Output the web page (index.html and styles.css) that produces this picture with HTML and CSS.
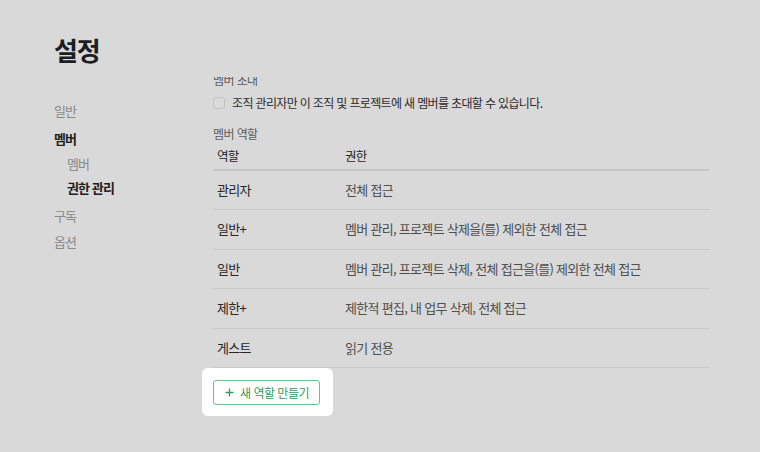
FILE: index.html
```html
<!DOCTYPE html>
<html lang="ko">
<head>
<meta charset="utf-8">
<title>설정</title>
<link rel="stylesheet" href="styles.css">
</head>
<body>
<div class="page">
  <h1 class="title">설정</h1>
  <div class="layout">
    <nav class="sidebar">
      <a class="nav-item">일반</a>
      <a class="nav-item active">멤버</a>
      <a class="nav-sub">멤버</a>
      <a class="nav-sub active">권한 관리</a>
      <a class="nav-item">구독</a>
      <a class="nav-item last">옵션</a>
    </nav>
    <main class="scroll">
      <div class="scroll-inner">
        <div class="section-label">멤버 초대</div>
        <label class="check-row">
          <span class="checkbox"></span>
          <span class="check-text">조직 관리자만 이 조직 및 프로젝트에 새 멤버를 초대할 수 있습니다.</span>
        </label>
        <div class="section-label roles">멤버 역할</div>
        <div class="table">
          <div class="row head">
            <div class="cell c1">역할</div>
            <div class="cell c2">권한</div>
          </div>
          <div class="row">
            <div class="cell c1">관리자</div>
            <div class="cell c2">전체 접근</div>
          </div>
          <div class="row">
            <div class="cell c1">일반+</div>
            <div class="cell c2">멤버 관리, 프로젝트 삭제을(를) 제외한 전체 접근</div>
          </div>
          <div class="row">
            <div class="cell c1">일반</div>
            <div class="cell c2">멤버 관리, 프로젝트 삭제, 전체 접근을(를) 제외한 전체 접근</div>
          </div>
          <div class="row">
            <div class="cell c1">제한+</div>
            <div class="cell c2">제한적 편집, 내 업무 삭제, 전체 접근</div>
          </div>
          <div class="row">
            <div class="cell c1">게스트</div>
            <div class="cell c2">읽기 전용</div>
          </div>
        </div>
        <div class="spotlight">
          <button class="btn-new">
            <svg class="plus" width="9" height="9" viewBox="0 0 9 9"><path d="M4.5 0.5V8.5M0.5 4.5H8.5" stroke="currentColor" stroke-width="1.3" fill="none"/></svg>
            <span>새 역할 만들기</span>
          </button>
        </div>
      </div>
    </main>
  </div>
</div>
</body>
</html>
```

FILE: styles.css
```css
html, body {
  margin: 0;
  padding: 0;
}
body {
  background: #d9d9d9;
  font-family: "Noto Sans CJK KR", "Noto Sans", sans-serif;
  color: #222;
  width: 760px;
  height: 452px;
  overflow: hidden;
}
.page {
  padding: 35px 0 0 54px;
}
.title {
  margin: 0 0 12px 0;
  font-size: 26px;
  line-height: 30px;
  font-weight: 700;
  color: #1b1e22;
  letter-spacing: -1.2px;
}
.layout {
  display: flex;
}
.sidebar {
  width: 148px;
  flex: none;
  display: flex;
  flex-direction: column;
  padding-top: 24px;
}
.nav-item, .nav-sub {
  display: block;
  font-size: 13px;
  line-height: 20px;
  height: 20px;
  color: #8a8a8a;
  letter-spacing: -0.9px;
}
.nav-item {
  margin-top: 8px;
}
.nav-item:first-child {
  margin-top: 0;
}
.nav-sub {
  margin-top: 4.5px;
  padding-left: 13px;
}
.nav-item.last {
  margin-top: 5.5px;
}
.active {
  color: #1e1e1e;
  font-weight: 700;
}
.scroll {
  width: 507px;
  height: 375px;
  padding-left: 11px;
  box-sizing: border-box;
  overflow: hidden;
}
.scroll-inner {
  margin-top: -7px;
}
.section-label {
  font-size: 12px;
  line-height: 20px;
  height: 20px;
  color: #5c5c5c;
  letter-spacing: -0.6px;
}
.section-label.roles {
  margin-top: 11px;
}
.check-row {
  display: flex;
  align-items: center;
  gap: 7px;
  height: 20px;
  margin-top: 3px;
}
.checkbox {
  width: 10px;
  height: 10px;
  border: 1px solid #c3c3c3;
  border-radius: 3px;
  background: #dadada;
  flex: none;
}
.check-text {
  font-size: 12px;
  line-height: 20px;
  color: #2b2b2b;
  letter-spacing: -0.65px;
}
.table {
  display: flex;
  flex-direction: column;
}
.row {
  display: flex;
  align-items: center;
  height: 39.5px;
  box-sizing: border-box;
  border-bottom: 1px solid #c8c8c8;
}
.row.head {
  height: 26.5px;
  border-bottom: 2px solid #c6c6c6;
}
.cell {
  font-size: 13px;
  line-height: 20px;
  letter-spacing: -0.7px;
}
.c1 {
  width: 128px;
  padding-left: 4px;
  flex: none;
  color: #262626;
}
.c2 {
  color: #4e4e4e;
}
.head .cell {
  font-size: 12.5px;
  color: #262626;
  letter-spacing: -0.7px;
}
.spotlight {
  display: inline-block;
  margin-left: -11px;
  padding: 12px 13px 11px 11px;
  background: #ffffff;
  border-radius: 6px;
}
.btn-new {
  display: flex;
  align-items: center;
  gap: 6px;
  box-sizing: border-box;
  width: 107px;
  height: 25px;
  padding: 0 0 0 11px;
  margin: 0;
  border: 1px solid #6cc08e;
  border-radius: 3px;
  background: #ffffff;
  color: #2f9a5c;
  font-family: "Noto Sans CJK KR", "Noto Sans", sans-serif;
  font-size: 12px;
  line-height: 20px;
  letter-spacing: -0.5px;
  white-space: nowrap;
  cursor: pointer;
}
.plus {
  display: block;
  flex: none;
}
```
